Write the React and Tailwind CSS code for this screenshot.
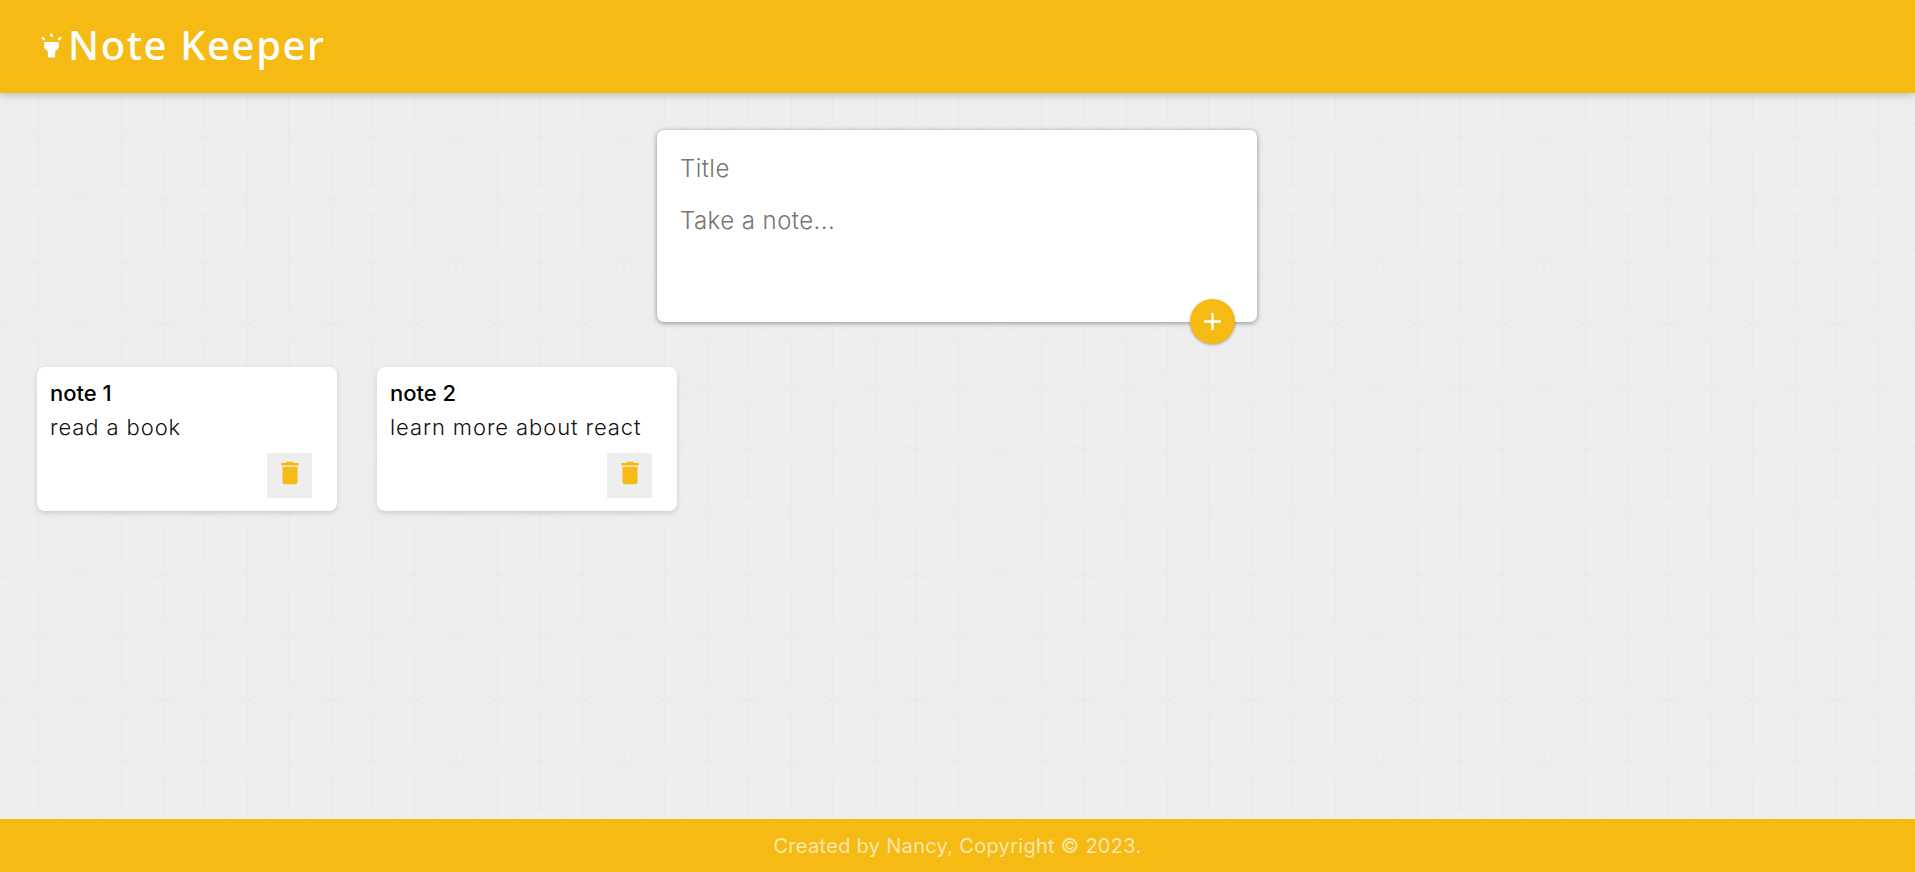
const notes = [
  { title: 'note 1', body: 'read a book' },
  { title: 'note 2', body: 'learn more about react' },
];

function HighlightIcon() {
  return (
    <svg viewBox="0 0 24 24" className="w-[29px] h-[29px] fill-white shrink-0">
      <path d="M6 14l3 3v5h6v-5l3-3V9H6zm5-12h2v3h-2zM3.5 5.875L4.914 4.46l2.12 2.122L5.62 7.997zm13.46.71l2.123-2.12 1.414 1.414L18.375 8z" />
    </svg>
  );
}

function Note({ title, body }) {
  return (
    <div className="w-[300px] h-[144px] bg-white rounded-[8px] shadow-[0_2px_5px_#ccc] pl-[13px] pr-[25px] pt-[13px]">
      <h1 className="text-[22px] leading-[26px] font-medium text-black">{title}</h1>
      <p className="text-[22px] leading-[26px] mt-[8px] font-light text-[#111] tracking-[0.9px]">{body}</p>
      <div className="flex justify-end mt-[13px]">
        <button className="w-[45px] h-[45px] bg-[#eeeeee] flex items-center justify-center pb-[5px]">
          <svg viewBox="0 0 24 24" className="w-[30px] h-[30px] fill-[#f5ba13]">
            <path d="M6 19c0 1.1.9 2 2 2h8c1.1 0 2-.9 2-2V7H6v12zM19 4h-3.5l-1-1h-5l-1 1H5v2h14V4z" />
          </svg>
        </button>
      </div>
    </div>
  );
}

export default function App() {
  return (
    <div className="h-screen flex flex-col overflow-hidden font-['Inter',sans-serif] bg-[#eeeeee] bg-[url('data:image/svg+xml,%3Csvg%20xmlns=%22http://www.w3.org/2000/svg%22%20width=%2284%22%20height=%22125%22%3E%3Cpath%20fill=%22none%22%20stroke=%22%23eaeaea%22%20stroke-width=%221.3%22%20d=%22M42%205L84%2020L42%2035L0%2020ZM42%2035V125M42%200V5M0%2067.5L42%2082.5L0%2097.5M84%2067.5L42%2082.5L84%2097.5M0%2097.5V125M0%200V67.5M84%2097.5V125M84%200V67.5%22/%3E%3C/svg%3E')] bg-size-[83.67px_125px] bg-position-[38px_116.7px]">
      <header className="h-[93px] shrink-0 bg-[#f5ba13] shadow-[0_0_10px_0_rgba(0,0,0,0.3)] flex items-center pl-[37px] pb-[3px] relative">
        <HighlightIcon />
        <h1 className="ml-[2px] text-[40px] leading-none font-medium text-white font-['Noto_Sans',sans-serif] tracking-[1.6px]">Note Keeper</h1>
      </header>

      <main className="flex-1">
        <form className="relative w-[600px] h-[192px] ml-[657px] mt-[37px] bg-white rounded-[7px] shadow-[0_1px_5px_rgb(138,137,137)] px-[23px] pt-[18px]">
          <input
            placeholder="Title"
            className="block w-full h-[40px] outline-none text-[24px] tracking-[0.45px] font-light placeholder:text-[#757575]"
          />
          <textarea
            placeholder="Take a note..."
            rows={3}
            className="block w-full mt-[19px] resize-none outline-none text-[24px] tracking-[0.45px] leading-[28px] font-light placeholder:text-[#757575]"
          />
          <button
            type="button"
            className="absolute left-[533px] top-[169px] w-[45px] h-[45px] rounded-full bg-[#f5ba13] shadow-[0_1px_3px_rgba(0,0,0,0.3)] flex items-center justify-center"
          >
            <svg viewBox="0 0 24 24" className="w-[29px] h-[29px] fill-white">
              <path d="M19 13h-6v6h-2v-6H5v-2h6V5h2v6h6v2z" />
            </svg>
          </button>
        </form>

        <div className="flex gap-[40px] pl-[37px] mt-[45px]">
          {notes.map((n) => (
            <Note key={n.title} title={n.title} body={n.body} />
          ))}
        </div>
      </main>

      <footer className="h-[53px] shrink-0 bg-[#f5ba13] flex items-center justify-center">
        <p className="text-[20px] text-[#fbe7ae] tracking-[0.3px]">Created by Nancy, Copyright © 2023.</p>
      </footer>
    </div>
  );
}
